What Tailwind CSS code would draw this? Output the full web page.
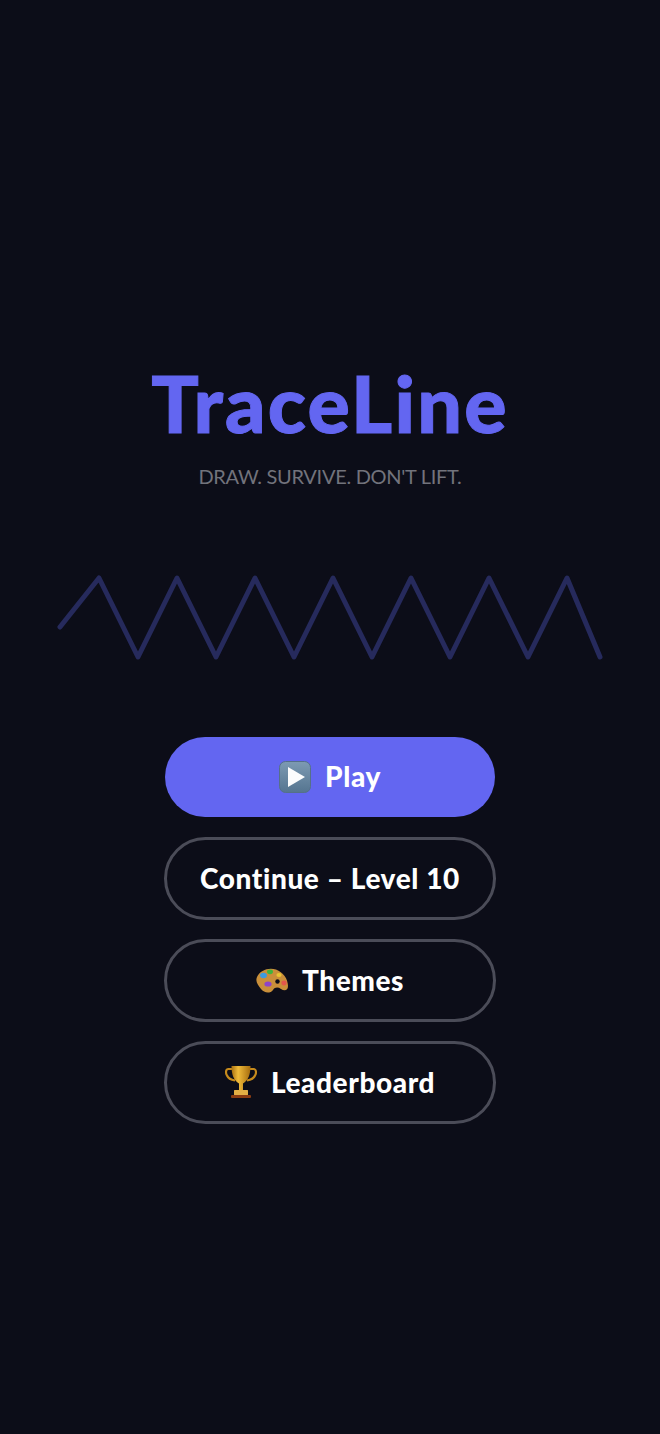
<!DOCTYPE html>
<html lang="en">
<head>
    <meta charset="UTF-8">
    <meta name="viewport" content="width=device-width, initial-scale=1.0">
    <title>TraceLine</title>
    <script src="https://cdn.jsdelivr.net/npm/@tailwindcss/browser@4"></script>
</head>
<body class="bg-[#0c0d18] font-['Lato','Noto_Sans',sans-serif] antialiased [font-variant-ligatures:none]">
    <main class="w-[660px] h-[1434px] flex flex-col items-center pt-[355px] overflow-hidden">
        <h1 class="text-[79px] leading-[96px] font-black text-[#6366f1] tracking-[2.2px] [-webkit-text-stroke:1px_#6366f1]">TraceLine</h1>
        <p class="mt-[11px] text-[20px] leading-[28px] text-[#72737c] tracking-[-0.3px]">DRAW. SURVIVE. DON'T LIFT.</p>

        <svg class="mt-[77px] shrink-0" width="660" height="100" viewBox="0 0 660 100" fill="none">
            <path d="M60 60 L99 11 L138 90 L177 11 L216 90 L255 11 L294 90 L333 11 L372 90 L411 11 L450 90 L489 11 L528 90 L567 11 L600 90" stroke="#262a5c" stroke-width="5" stroke-linecap="round" stroke-linejoin="round"/>
        </svg>

        <div class="mt-[70px] flex flex-col items-center">
            <button class="w-[330px] h-[80px] rounded-full bg-[#6366f1] flex items-center justify-center gap-[14px] text-white text-[28px] font-black tracking-[0.6px]">
                <svg width="32" height="32" viewBox="0 0 32 32">
                    <defs>
                        <linearGradient id="playBg" x1="0" y1="0" x2="0" y2="1">
                            <stop offset="0" stop-color="#7d9ab3"/>
                            <stop offset="1" stop-color="#557590"/>
                        </linearGradient>
                    </defs>
                    <rect x="0.5" y="0.5" width="31" height="31" rx="6" fill="url(#playBg)" stroke="#557089"/>
                    <path d="M9 6 L26 16 L9 26 Z" fill="#fbfcfd"/>
                </svg>
                <span class="-mt-[2px]">Play</span>
            </button>
            <button class="mt-[20px] w-[332px] h-[83px] rounded-full border-[3px] border-[#4b4c58] flex items-center justify-center text-white text-[28px] font-black tracking-[0.6px]">
                <span class="-mt-[2px]">Continue – Level 10</span>
            </button>
            <button class="mt-[19px] w-[332px] h-[83px] rounded-full border-[3px] border-[#4b4c58] flex items-center justify-center gap-[14px] text-white text-[28px] font-black tracking-[0.6px]">
                <svg width="32" height="26" viewBox="0 0 32 26">
                    <path d="M1 9 C4 2 13 -1 20 1.500 C27 4 32 11 32 18 C32 23 28 23 25 21 C22 19 19 19 17 22 C14 26 8 25 5 21 C2 17 -1 14 1 9 Z" fill="#c98f3a"/>
                    <ellipse cx="7.500" cy="7.500" rx="3.400" ry="2.800" fill="#3c9be0"/>
                    <ellipse cx="14" cy="3.800" rx="3" ry="2.400" fill="#3fb53c"/>
                    <ellipse cx="23" cy="7" rx="2.600" ry="1.900" fill="#e8c533"/>
                    <ellipse cx="12" cy="16" rx="3.600" ry="2.600" fill="#8e44c9"/>
                    <ellipse cx="28" cy="15" rx="2.600" ry="2.400" fill="#e2574c"/>
                    <circle cx="21.500" cy="13.500" r="2.200" fill="#0c0d18"/>
                </svg>
                <span class="-mt-[2px]">Themes</span>
            </button>
            <button class="mt-[19px] w-[332px] h-[83px] rounded-full border-[3px] border-[#4b4c58] flex items-center justify-center gap-[14px] text-white text-[28px] font-black tracking-[0.6px]">
                <svg class="-mt-[2px]" width="32" height="33" viewBox="0 0 32 33" fill="none">
                    <defs>
                        <linearGradient id="cup" x1="0" y1="0" x2="1" y2="0">
                            <stop offset="0" stop-color="#a86f10"/>
                            <stop offset="0.35" stop-color="#f0bb3a"/>
                            <stop offset="1" stop-color="#a56c0e"/>
                        </linearGradient>
                    </defs>
                    <path d="M8 4 H3.500 C0.500 4 0.500 8 2 10.500 C3.500 14 7 15 10 15.500 M24 4 H28.500 C31.500 4 31.500 8 30 10.500 C28.500 14 25 15 22 15.500" stroke="#c68a1c" stroke-width="2.200"/>
                    <path d="M6.500 1 H25.500 C25.500 10 23 15.500 18 18.500 V25 H14 V18.500 C9 15.500 6.500 10 6.500 1 Z" fill="url(#cup)"/>
                    <rect x="9" y="25" width="14" height="5" rx="0.500" fill="#e3ae45"/>
                    <rect x="6" y="30" width="20" height="3" rx="1" fill="#8a3b12"/>
                </svg>
                <span class="-mt-[2px]">Leaderboard</span>
            </button>
        </div>
    </main>
</body>
</html>
